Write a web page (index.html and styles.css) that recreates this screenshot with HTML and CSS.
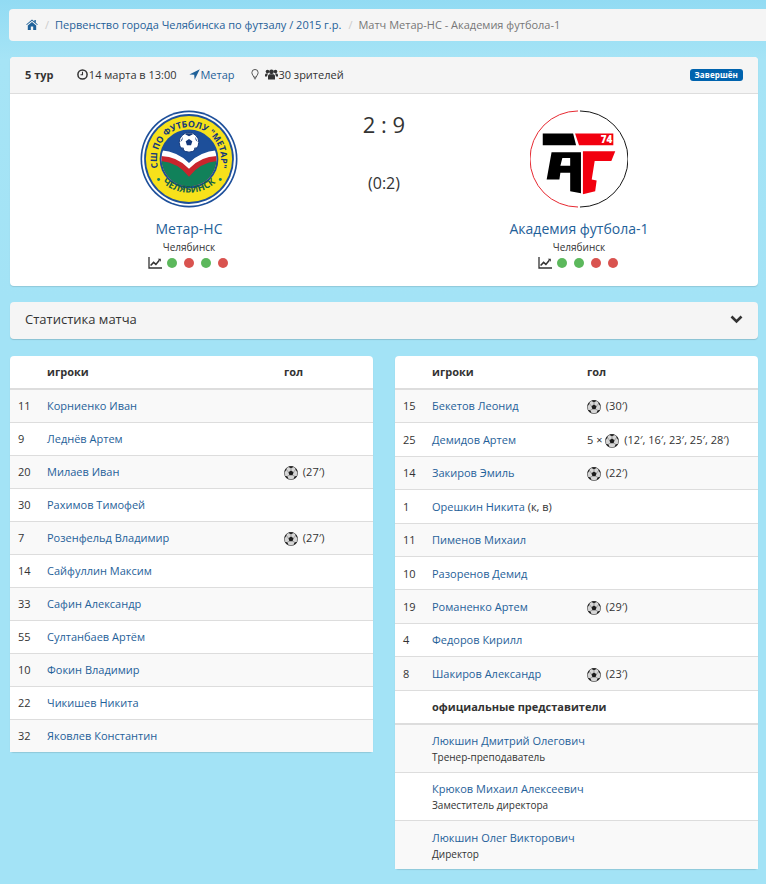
FILE: index.html
```html
<!DOCTYPE html>
<html lang="ru">
<head>
    <meta charset="UTF-8">
    <meta name="viewport" content="width=device-width, initial-scale=1.0">
    <title>Матч Метар-НС - Академия футбола-1</title>
    <link rel="stylesheet" href="styles.css">
</head>
<body>
    <svg class="defs" width="0" height="0">
        <defs>
            <symbol id="ball" viewBox="0 0 16 16">
                <circle cx="8" cy="8" r="7.6" fill="#d6d6d6" stroke="#4a4a4a" stroke-width="0.8"/>
                <path d="M8 5l2.900 2.100-1.100 3.400H6.200L5.100 7.100z" fill="#1c1c1c"/>
                <path d="M5.200 1.200L8 2.600l2.800-1.400L9.600 .4H6.400zM.6 7l2.200-2.600.6-2.200L1.400 4zM15.400 7l-2.200-2.600-.6-2.200L14.600 4zM1 11.400l2.800.4 1.400 3-2.400-1.200zM15 11.400l-2.800.4-1.400 3 2.400-1.200z" fill="#1c1c1c"/>
                <path d="M8 2.400v2.800M2.800 4.200l2.500 3M13.200 4.200l-2.500 3M3.800 11.600l2.500-1.200M12.200 11.600l-2.500-1.200" stroke="#666" stroke-width="0.6" fill="none"/>
            </symbol>
            <symbol id="chart" viewBox="0 0 14 12">
                <path d="M1 0v11h13" fill="none" stroke="#333" stroke-width="1.3"/>
                <path d="M2.600 8.600l3-3.200 2.300 2 3.400-4.200" fill="none" stroke="#333" stroke-width="1.500"/>
                <path d="M9.800 1.800h3v3z" fill="#333"/>
            </symbol>
        </defs>
    </svg>

    <ol class="breadcrumb">
        <li>
            <a href="#" class="home-link">
                <svg class="icon" width="12" height="11" viewBox="0 0 12 11"><path d="M6 .4L.2 5.400l.6.700L6 1.800l5.200 4.300.6-.700-2-1.700V1H8.400v1.400zM1.800 6.400V11h3V7.600h2.400V11h3V6.400L6 2.900z" fill="#1f6199"/></svg>
            </a>
        </li>
        <li><a href="#">Первенство города Челябинска по футзалу / 2015 г.р.</a></li>
        <li class="active">Матч Метар-НС - Академия футбола-1</li>
    </ol>

    <section class="panel match">
        <header class="match-head">
            <div class="match-info">
                <strong class="round">5 тур</strong>
                <span class="info-item">
                    <svg class="icon" width="11" height="11" viewBox="0 0 11 11"><circle cx="5.500" cy="5.500" r="4.600" fill="none" stroke="#333" stroke-width="1.500"/><path d="M5.500 2.800v3h-2" fill="none" stroke="#333" stroke-width="1.100"/></svg>
                    14 марта в 13:00
                </span>
                <a href="#" class="info-item info-item-link">
                    <svg class="icon" width="11" height="11" viewBox="0 0 11 11"><path d="M10.800.3L.3 5.500l4.900.3.400 4.900z" fill="#1f6199"/></svg>
                    Метар
                </a>
                <span class="info-item info-item-bulb">
                    <svg class="icon" width="8" height="12" viewBox="0 0 9 12"><path d="M3 9.500C3 7.800 1 6.900 1 4.400a3.500 3.500 0 0 1 7 0C8 6.900 6 7.800 6 9.500z" fill="none" stroke="#444" stroke-width="1"/><path d="M3.300 10.500h2.400M3.800 11.500h1.400" stroke="#444" stroke-width="1"/></svg>
                </span>
                <span class="info-item">
                    <svg class="icon" width="13" height="11" viewBox="0 0 13 11"><circle cx="6.500" cy="2.800" r="2.400" fill="#333"/><circle cx="2.500" cy="2.600" r="1.800" fill="#333"/><circle cx="10.500" cy="2.600" r="1.800" fill="#333"/><path d="M3 10.500V7.200c0-1.400 1-2 2-2h3c1 0 2 .6 2 2v3.300zM0 7.500V6c0-1 .7-1.600 1.500-1.600h1.400L2 7.500zM13 7.500V6c0-1-.7-1.600-1.500-1.600h-1.400l.9 3.100z" fill="#333"/></svg>
                    30 зрителей
                </span>
            </div>
            <span class="label">Завершён</span>
        </header>

        <div class="match-body">
            <div class="team">
                <svg class="logo" width="98" height="98" viewBox="0 0 100 100">
                    <defs>
                        <path id="ring-top" d="M50 82.600a32.600 32.600 0 1 1 .01 0"/>
                        <path id="ring-bottom" d="M11 56a41 41 0 0 0 78 0"/>
                        <clipPath id="inner"><circle cx="50" cy="50" r="28"/></clipPath>
                    </defs>
                    <circle cx="50" cy="50" r="49.500" fill="#1d4f9a"/>
                    <circle cx="50" cy="50" r="47.800" fill="#fff"/>
                    <circle cx="50" cy="50" r="45.800" fill="#1d4f9a"/>
                    <circle cx="50" cy="50" r="44" fill="#f7e11b"/>
                    <circle cx="50" cy="50" r="30" fill="#1d4f9a"/>
                    <g clip-path="url(#inner)">
                        <rect x="20" y="20" width="60" height="60" fill="#1d4f9a"/>
                        <path d="M20 41Q38 42 50 54Q62 42 80 41V80H20z" fill="#fff"/>
                        <path d="M20 47Q38 47 50 60Q62 47 80 47V80H20z" fill="#c9252d"/>
                        <path d="M20 52Q38 53 50 68Q62 53 80 52V80H20z" fill="#11815a"/>
                    </g>
                    <circle cx="50" cy="33" r="10" fill="#fff" stroke="#14387a" stroke-width="1"/>
                    <path d="M50 29.500l3.400 2.400-1.300 4h-4.200l-1.300-4zM46 24.800l4 1.900 4-1.900-1.600-1h-4.800zM41 33l2.200-2.400.5-3.200zM59 33l-2.200-2.400-.5-3.200zM45.300 41.800l-.8-3.200-2.700-.6zM54.700 41.800l.8-3.200 2.700-.6z" fill="#14387a"/>
                    <text class="logo-text"><textPath href="#ring-top" startOffset="50%">СШ ПО ФУТБОЛУ "МЕТАР"</textPath></text>
                    <text class="logo-text logo-text-big"><textPath href="#ring-bottom" startOffset="50%">ЧЕЛЯБИНСК</textPath></text>
                    <circle cx="19" cy="71" r="1.500" fill="#11815a"/>
                    <circle cx="82" cy="71" r="1.500" fill="#11815a"/>
                </svg>
                <a href="#" class="team-name">Метар-НС</a>
                <div class="team-city">Челябинск</div>
                <div class="form">
                    <svg class="form-chart" width="14" height="12"><use href="#chart"/></svg>
                    <i class="dot win"></i><i class="dot loss"></i><i class="dot win"></i><i class="dot loss"></i>
                </div>
            </div>

            <div class="score">
                <div class="score-main">2 : 9</div>
                <div class="score-half">(0:2)</div>
            </div>

            <div class="team">
                <svg class="logo" width="98" height="98" viewBox="0 0 100 100">
                    <path d="M49 1a49 49 0 0 0 0 98" fill="none" stroke="#e5252d" stroke-width="1"/>
                    <path d="M51 1a49 49 0 0 1 0 98" fill="none" stroke="#111" stroke-width="1"/>
                    <path d="M13 24H44L47 36H13z" fill="#000"/>
                    <path d="M46 24H85V36H50z" fill="#f2000f"/>
                    <path fill-rule="evenodd" d="M22 43H52V85L41 83V64H31L30 71H17zM33 49h8v8H31z" fill="#000"/>
                    <path d="M54 42H87L83 52H66L63 71L68 72L66.500 83L54 86z" fill="#f2000f"/>
                    <text class="logo-74" x="84" y="34" text-anchor="end">74</text>
                </svg>
                <a href="#" class="team-name">Академия футбола-1</a>
                <div class="team-city">Челябинск</div>
                <div class="form">
                    <svg class="form-chart" width="14" height="12"><use href="#chart"/></svg>
                    <i class="dot win"></i><i class="dot win"></i><i class="dot loss"></i><i class="dot loss"></i>
                </div>
            </div>
        </div>
    </section>

    <section class="panel stats-toggle">
        <span>Статистика матча</span>
        <svg width="13" height="9" viewBox="0 0 13 9"><path d="M1.500 1.500l5 5 5-5" fill="none" stroke="#333" stroke-width="2.600"/></svg>
    </section>

    <div class="lineups">
        <table class="panel lineup lineup-home">
            <thead>
                <tr><th class="col-num"></th><th class="col-name">игроки</th><th>гол</th></tr>
            </thead>
            <tbody>
                <tr><td>11</td><td><a href="#">Корниенко Иван</a></td><td></td></tr>
                <tr><td>9</td><td><a href="#">Леднёв Артем</a></td><td></td></tr>
                <tr><td>20</td><td><a href="#">Милаев Иван</a></td><td><svg class="ball"><use href="#ball"/></svg> (27′)</td></tr>
                <tr><td>30</td><td><a href="#">Рахимов Тимофей</a></td><td></td></tr>
                <tr><td>7</td><td><a href="#">Розенфельд Владимир</a></td><td><svg class="ball"><use href="#ball"/></svg> (27′)</td></tr>
                <tr><td>14</td><td><a href="#">Сайфуллин Максим</a></td><td></td></tr>
                <tr><td>33</td><td><a href="#">Сафин Александр</a></td><td></td></tr>
                <tr><td>55</td><td><a href="#">Султанбаев Артём</a></td><td></td></tr>
                <tr><td>10</td><td><a href="#">Фокин Владимир</a></td><td></td></tr>
                <tr><td>22</td><td><a href="#">Чикишев Никита</a></td><td></td></tr>
                <tr><td>32</td><td><a href="#">Яковлев Константин</a></td><td></td></tr>
            </tbody>
        </table>

        <table class="panel lineup lineup-away">
            <thead>
                <tr><th class="col-num"></th><th class="col-name">игроки</th><th>гол</th></tr>
            </thead>
            <tbody>
                <tr><td>15</td><td><a href="#">Бекетов Леонид</a></td><td><svg class="ball"><use href="#ball"/></svg> (30′)</td></tr>
                <tr><td>25</td><td><a href="#">Демидов Артем</a></td><td>5 × <svg class="ball"><use href="#ball"/></svg> (12′, 16′, 23′, 25′, 28′)</td></tr>
                <tr><td>14</td><td><a href="#">Закиров Эмиль</a></td><td><svg class="ball"><use href="#ball"/></svg> (22′)</td></tr>
                <tr><td>1</td><td><a href="#">Орешкин Никита</a> (к, в)</td><td></td></tr>
                <tr><td>11</td><td><a href="#">Пименов Михаил</a></td><td></td></tr>
                <tr><td>10</td><td><a href="#">Разоренов Демид</a></td><td></td></tr>
                <tr><td>19</td><td><a href="#">Романенко Артем</a></td><td><svg class="ball"><use href="#ball"/></svg> (29′)</td></tr>
                <tr><td>4</td><td><a href="#">Федоров Кирилл</a></td><td></td></tr>
                <tr><td>8</td><td><a href="#">Шакиров Александр</a></td><td><svg class="ball"><use href="#ball"/></svg> (23′)</td></tr>
            </tbody>
            <thead>
                <tr><th></th><th colspan="2">официальные представители</th></tr>
            </thead>
            <tbody>
                <tr><td></td><td colspan="2"><a href="#">Люкшин Дмитрий Олегович</a><small>Тренер-преподаватель</small></td></tr>
                <tr><td></td><td colspan="2"><a href="#">Крюков Михаил Алексеевич</a><small>Заместитель директора</small></td></tr>
                <tr><td></td><td colspan="2"><a href="#">Люкшин Олег Викторович</a><small>Директор</small></td></tr>
            </tbody>
        </table>
    </div>
</body>
</html>
```
FILE: styles.css
```css
html {
    overflow-x: hidden;
}
body {
    margin: 0;
    padding: 9px 8px 15px 10px;
    font-family: "Open Sans", sans-serif;
    font-size: 11px;
    line-height: 1.42857;
    color: #333;
    background: #a3e3f6 linear-gradient(#92dbf3, #a6e4f6 60px, #a3e3f6 300px) no-repeat;
}
a {
    color: #1f6199;
    text-decoration: none;
}
.defs {
    position: absolute;
}
.icon {
    vertical-align: -1px;
}

.breadcrumb {
    display: flex;
    align-items: center;
    height: 32px;
    margin: 0 -8px 16px -1px;
    padding: 0 17px;
    list-style: none;
    background: #f5f5f5;
    border-radius: 4px 0 0 4px;
}
.breadcrumb li + li::before {
    content: "/";
    padding: 0 6px 0 7px;
    color: #ccc;
}
.breadcrumb .active {
    color: #777;
}

.panel {
    background: #fff;
    border-radius: 4px;
    box-shadow: 0 1px 1px rgba(0, 0, 0, 0.12);
}

.match {
    margin-bottom: 16px;
}
.match-head {
    display: flex;
    align-items: center;
    justify-content: space-between;
    height: 36px;
    padding: 0 15px;
    background: #f5f5f5;
    border-bottom: 1px solid #ddd;
    border-radius: 4px 4px 0 0;
}
.match-info {
    display: flex;
    align-items: center;
}
.round {
    width: 52px;
}
.info-item {
    margin-right: 12px;
}
.info-item .icon {
    margin-right: -2px;
}
.info-item-link {
    margin-right: 16px;
}
.info-item-bulb {
    margin-right: 8px;
}
.label {
    padding: 1px 5px 2px;
    font-size: 8px;
    line-height: 9px;
    font-weight: 700;
    letter-spacing: 0.1px;
    color: #fff;
    background: #0063ae;
    border-radius: 3px;
}

.match-body {
    display: grid;
    grid-template-columns: 358px 32px 358px;
    height: 192px;
}
.team {
    display: flex;
    flex-direction: column;
    align-items: center;
    padding-top: 16px;
}
.team-name {
    margin-top: 11px;
    font-size: 14px;
    line-height: 20px;
}
.team-city {
    margin-top: 1px;
    font-size: 10px;
    line-height: 14px;
}
.form {
    display: flex;
    align-items: center;
    gap: 7px;
    margin-top: 3px;
    padding-right: 2px;
}
.form-chart {
    margin-right: -2px;
}
.dot {
    width: 10px;
    height: 10px;
    border-radius: 50%;
}
.dot.win {
    background: #5cb85c;
}
.dot.loss {
    background: #d9534f;
}
.logo-text {
    font-size: 9px;
    font-weight: 700;
    fill: #14387a;
    text-anchor: middle;
}
.logo-text-big {
    font-size: 9.5px;
    fill: #0f5f45;
}
.logo-74 {
    font-size: 10px;
    font-weight: 800;
    fill: #fff;
}

.score {
    text-align: center;
    white-space: nowrap;
    display: flex;
    flex-direction: column;
    align-items: center;
}
.score-main {
    margin-top: 14px;
    font-size: 22px;
    line-height: 32px;
}
.score-half {
    margin-top: 32px;
    font-size: 16px;
    line-height: 22px;
}

.stats-toggle {
    display: flex;
    align-items: center;
    justify-content: space-between;
    box-sizing: border-box;
    height: 37px;
    margin-bottom: 17px;
    padding: 0 15px 2px;
    background: #f5f5f5;
    font-size: 13px;
    box-shadow: 0 1px 1px rgba(0, 0, 0, 0.15);
}

.lineups {
    display: flex;
    align-items: flex-start;
    gap: 22px;
}
.lineup {
    width: 363px;
    border-collapse: separate;
    border-spacing: 0;
    table-layout: fixed;
}
.lineup th,
.lineup td {
    padding: 8px;
    text-align: left;
    vertical-align: top;
}
.lineup th {
    height: 33px;
    box-sizing: border-box;
    font-weight: 700;
    border-bottom: 2px solid #ddd;
}
.lineup td {
    border-bottom: 1px solid #ddd;
    line-height: 16px;
}
.lineup-away td {
    padding-top: 8.5px;
    line-height: 15.9px;
}
.lineup tbody tr:nth-child(odd) td {
    background: #f9f9f9;
}
.lineup tbody:last-child tr:last-child td {
    border-bottom: none;
}
.lineup .col-num {
    width: 29px;
}
.lineup-home .col-name {
    width: 237px;
}
.lineup-away .col-name {
    width: 155px;
}
.lineup small {
    display: block;
    margin-top: 1px;
    font-size: 10px;
    line-height: 14px;
    color: #333;
}
.ball {
    width: 14px;
    height: 14px;
    margin-right: 2px;
    vertical-align: -4px;
}
```
